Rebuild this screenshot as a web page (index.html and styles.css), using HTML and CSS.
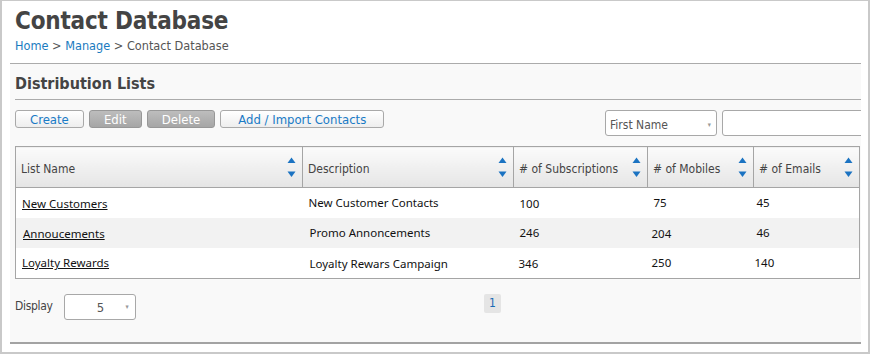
FILE: index.html
```html
<!DOCTYPE html>
<html>
<head>
<meta charset="utf-8">
<link rel="stylesheet" href="styles.css">
</head>
<body>
<div class="frame">
  <div class="header">
    <h1 class="title">Contact Database</h1>
    <div class="crumbs"><a class="crumb-link">Home</a> &gt; <a class="crumb-link">Manage</a> &gt; Contact Database</div>
  </div>
  <div class="panel">
    <h2 class="panel-title">Distribution Lists</h2>
    <div class="toolbar">
      <div class="btns">
        <button class="btn btn-on w-create">Create</button>
        <button class="btn btn-off w-edit">Edit</button>
        <button class="btn btn-off w-delete">Delete</button>
        <button class="btn btn-on w-add">Add / Import Contacts</button>
      </div>
      <div class="search">
        <div class="select sel-field"><span>First Name</span><span class="caret">&#9662;</span></div>
        <div class="input"></div>
      </div>
    </div>
    <table class="grid">
      <thead>
        <tr>
          <th class="c1"><div class="th"><span>List Name</span><svg class="sort" width="9" height="21" viewBox="0 0 9 21"><path d="M4.5 0.5 L8.5 6 L0.5 6 Z"/><path d="M0.5 14.5 L8.5 14.5 L4.5 20 Z"/></svg></div></th>
          <th class="c2"><div class="th"><span>Description</span><svg class="sort" width="9" height="21" viewBox="0 0 9 21"><path d="M4.5 0.5 L8.5 6 L0.5 6 Z"/><path d="M0.5 14.5 L8.5 14.5 L4.5 20 Z"/></svg></div></th>
          <th class="c3"><div class="th"><span># of Subscriptions</span><svg class="sort" width="9" height="21" viewBox="0 0 9 21"><path d="M4.5 0.5 L8.5 6 L0.5 6 Z"/><path d="M0.5 14.5 L8.5 14.5 L4.5 20 Z"/></svg></div></th>
          <th class="c4"><div class="th"><span># of Mobiles</span><svg class="sort" width="9" height="21" viewBox="0 0 9 21"><path d="M4.5 0.5 L8.5 6 L0.5 6 Z"/><path d="M0.5 14.5 L8.5 14.5 L4.5 20 Z"/></svg></div></th>
          <th class="c5"><div class="th"><span># of Emails</span><svg class="sort" width="9" height="21" viewBox="0 0 9 21"><path d="M4.5 0.5 L8.5 6 L0.5 6 Z"/><path d="M0.5 14.5 L8.5 14.5 L4.5 20 Z"/></svg></div></th>
        </tr>
      </thead>
      <tbody>
        <tr>
          <td><a class="lnk d-5 x6">New Customers</a></td>
          <td><span class="d-2 x6">New Customer Contacts</span></td>
          <td><span class="d-5 x6">100</span></td>
          <td><span class="d-3 x6">75</span></td>
          <td><span class="d-2 x3">45</span></td>
        </tr>
        <tr class="alt">
          <td><a class="lnk d-5 x7">Annoucements</a></td>
          <td><span class="d-1 x7">Promo Annoncements</span></td>
          <td><span class="d-1 x6">246</span></td>
          <td><span class="d-4 x4">204</span></td>
          <td><span class="d-1 x3">46</span></td>
        </tr>
        <tr>
          <td><a class="lnk d-1 x6">Loyalty Rewards</a></td>
          <td><span class="d-4 x7">Loyalty Rewars Campaign</span></td>
          <td><span class="d-4 x5">346</span></td>
          <td><span class="d-2 x4">250</span></td>
          <td><span class="d-0 x1">140</span></td>
        </tr>
      </tbody>
    </table>
    <div class="footer">
      <div class="display">
        <span class="display-label">Display</span>
        <div class="select sel-size"><span class="size-val">5</span><span class="caret">&#9662;</span></div>
      </div>
      <div class="pager"><span class="page">1</span></div>
    </div>
  </div>
</div>
</body>
</html>
```
FILE: styles.css
```css
* { box-sizing: border-box; }
html, body { margin: 0; padding: 0; background: #fff; }
.frame {
  width: 870px;
  height: 354px;
  border: 2px solid #c9c9c9;
  border-top-width: 1px;
  padding: 0 7px 8px 8px;
  display: flex;
  flex-direction: column;
  overflow: hidden;
  font-family: "DejaVu Sans Condensed", "DejaVu Sans", sans-serif;
}
.header { padding: 6px 0 0 5px; height: 62px; }
.title {
  margin: 0;
  font-size: 24px;
  line-height: 29px;
  font-weight: bold;
  color: #444;
  letter-spacing: -0.2px;
}
.crumbs {
  margin-top: 2px;
  font-size: 12.6px;
  line-height: 16px;
  color: #555;
}
.crumb-link { color: #1a7bc0; }
.panel {
  flex: 1;
  background: #f9f9f9;
  border-top: 1px solid #ababab;
  border-bottom: 2px solid #a3a3a3;
  padding-left: 5px;
  overflow: hidden;
}
.panel-title {
  margin: 0;
  font-size: 16px;
  line-height: 20px;
  padding-top: 10px;
  padding-bottom: 5px;
  font-weight: bold;
  color: #444;
  border-bottom: 1px solid #ababab;
}
.toolbar {
  display: flex;
  margin-top: 10px;
  height: 26px;
}
.btns { display: flex; gap: 5px; align-items: flex-start; flex: none; width: 369px; }
.btn {
  font-family: inherit;
  height: 18px;
  padding: 0;
  font-size: 13px;
  line-height: 15px;
  border-radius: 3px;
  cursor: pointer;
}
.btn-on {
  color: #1a7bc6;
  background: linear-gradient(#ffffff, #eeeeee);
  border: 1px solid #a9a9a9;
}
.btn-off {
  color: #fff;
  background: linear-gradient(#bdbdbd, #a6a6a6);
  border: 1px solid #979797;
}
.w-create { width: 69px; }
.w-edit { width: 53px; }
.w-delete { width: 69px; }
.w-add { width: 164px; }
.search { display: flex; gap: 5px; flex: none; margin-left: 221px; }
.select {
  display: flex;
  align-items: center;
  justify-content: space-between;
  background: #fff;
  border: 1px solid #a8a8a8;
  border-radius: 3px;
  height: 26px;
  font-size: 12px;
  color: #555;
}
.sel-field { width: 112px; padding: 3px 5px 0 4px; }
.caret { font-size: 7px; color: #999; }
.input {
  width: 160px;
  height: 26px;
  background: #fff;
  border: 1px solid #a8a8a8;
  border-radius: 3px;
}
.grid {
  margin-top: 10px;
  width: 844px;
  border-collapse: collapse;
  border: 1px solid #a5a5a5;
  background: #fff;
  table-layout: fixed;
}
.grid th {
  height: 41px;
  padding: 3px 6px 0 5px;
  text-align: left;
  font-weight: normal;
  font-size: 12px;
  color: #444;
  background: linear-gradient(#fbfbfb, #e5e5e5);
  border-left: 1px solid #a5a5a5;
  border-bottom: 1px solid #a5a5a5;
}
.c1 { width: 287px; }
.c2 { width: 211px; }
.c3 { width: 134px; }
.c4 { width: 106px; }
.c5 { width: 106px; }
.th { display: flex; align-items: center; justify-content: space-between; }
.sort { fill: #1b73c2; flex: none; margin-top: -3px; }
.grid td {
  height: 30px;
  padding: 0;
  vertical-align: middle;
  font-family: "Noto Sans", "Open Sans", sans-serif;
  font-size: 11.5px;
  color: #111;
}
.alt td { background: #f2f2f2; }
.grid tr:last-child td { height: 31px; }
.grid td > * { display: inline-block; }
.lnk { color: #111; text-decoration: underline; }
.d-0 { margin-top: -8px; }
.d-1 { margin-top: -6px; }
.d-2 { margin-top: -4px; }
.d-3 { margin-top: -2px; }
.d-4 { margin-top: 2px; }
.d-5 { margin-top: 2px; }
.x1 { margin-left: 1px; }
.x3 { margin-left: 3px; }
.x4 { margin-left: 4px; }
.x5 { margin-left: 5px; }
.x6 { margin-left: 6px; }
.x7 { margin-left: 7px; }
.footer {
  display: flex;
  align-items: flex-start;
  margin-top: 15px;
}
.display { display: flex; align-items: center; gap: 11px; width: 469px; }
.display-label { font-size: 12px; color: #444; letter-spacing: -0.3px; margin-top: -2px; }
.sel-size { width: 72px; padding: 0 6px 0 32px; }
.size-val { font-size: 13px; }
.pager { display: flex; }
.page {
  display: inline-block;
  width: 17px;
  height: 19px;
  line-height: 19px;
  text-align: center;
  background: #e5e5e5;
  border-radius: 2px;
  font-size: 12px;
  color: #1a6bb5;
}
```
